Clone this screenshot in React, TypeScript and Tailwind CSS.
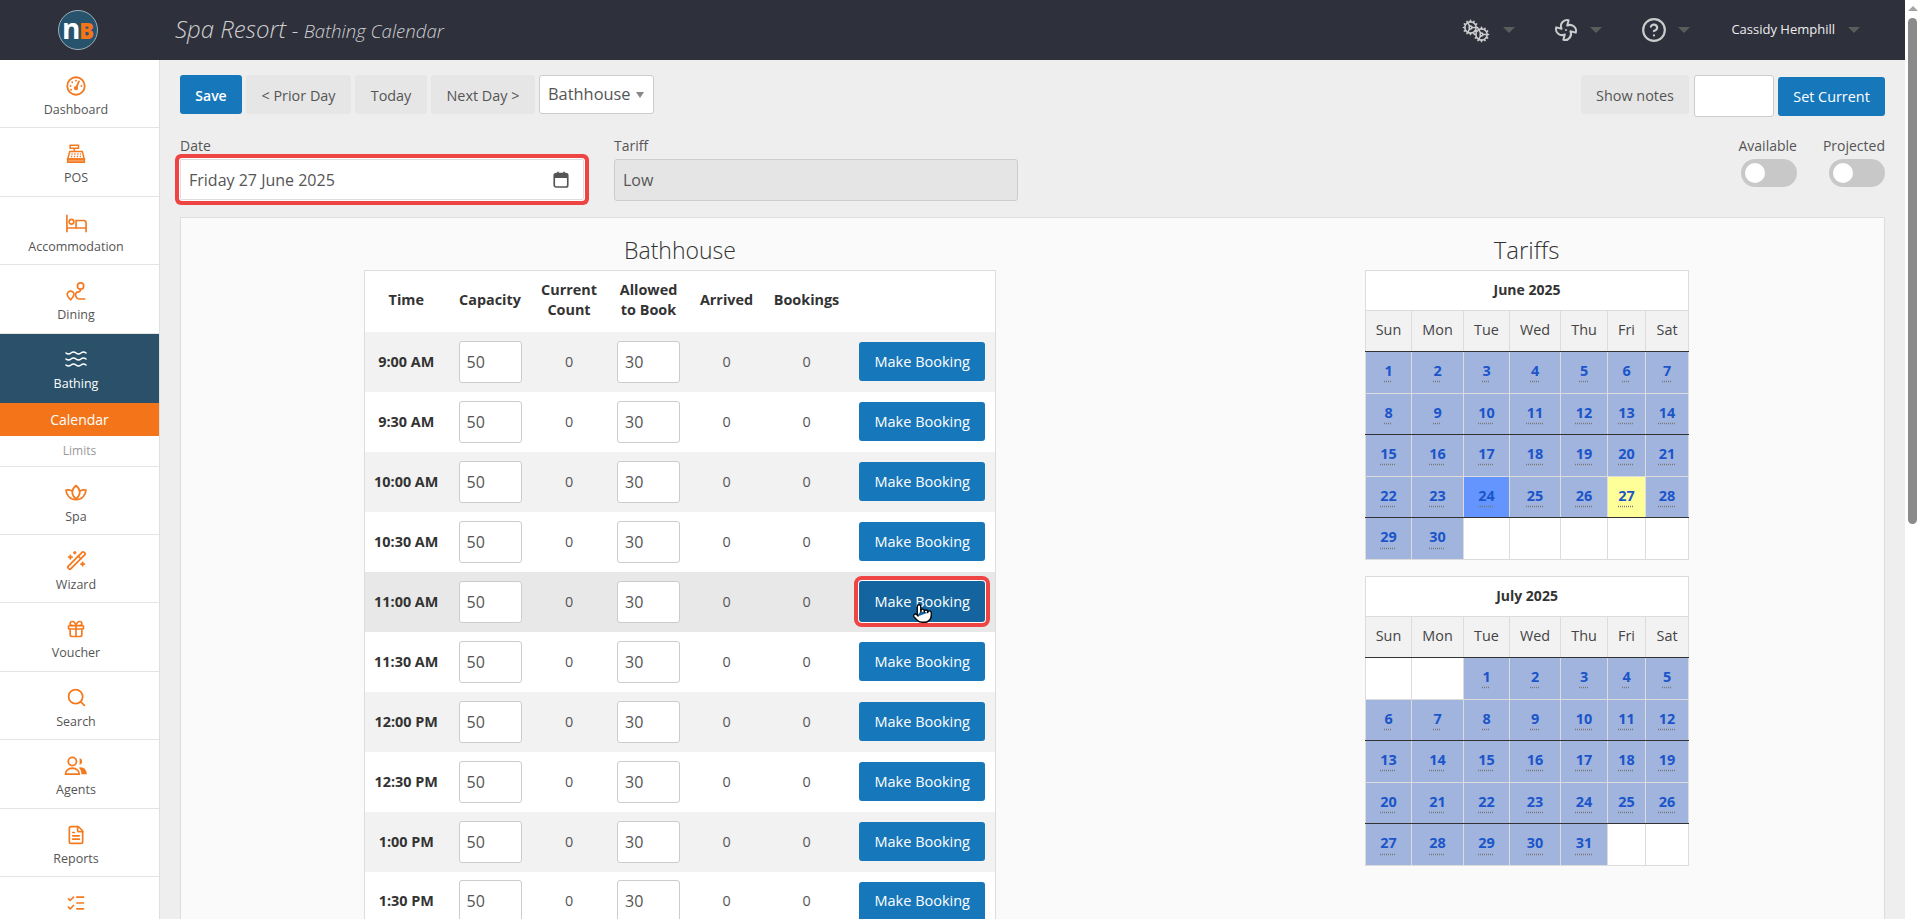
import { CircleHelp, Cog, Fan, FileText, Gift, ListChecks, Pointer, Search, WandSparkles, Waves } from "lucide-react";

function GaugeIcon() {
  return (
    <svg width="20" height="20" viewBox="0 0 24 24" fill="none" stroke="currentColor" strokeWidth="2.2" strokeLinecap="round">
      <circle cx="12" cy="12" r="10.5" />
      <path d="M12.5 13.5 15.500 6.500" />
      <circle cx="12" cy="14.500" r="1.500" />
      <path d="M12 5.500v.1M7.500 7.500v.1M5.500 12v.1M18.500 12v.1M6 16.500h.1" />
    </svg>
  );
}

function RegisterIcon() {
  return (
    <svg width="20" height="20" viewBox="0 0 24 24" fill="none" stroke="currentColor" strokeWidth="1.8">
      <path d="M5 1.500h10v3.500H5zM10 5v4" />
      <path d="M4.500 9h15L22 18H2z" />
      <path d="M6.500 12h1.500M10 12h1.500M13.500 12H15M17 12h1M6 15h1.500M9.500 15H11M13 15h1.500M16.500 15H18" strokeWidth="1.6" />
      <path d="M2 18h20v4H2z" fill="currentColor" fillOpacity="0.7" />
    </svg>
  );
}

function BedIcon() {
  return (
    <svg width="23" height="20" viewBox="0 0 27 24" fill="none" stroke="currentColor" strokeWidth="2">
      <path d="M2 2v21M25 23V12a3 3 0 0 0-3-3h-9v9M2 18h23" />
      <circle cx="7.500" cy="10.500" r="2.800" />
    </svg>
  );
}

function DiningIcon() {
  return (
    <svg width="20" height="21" viewBox="0 0 24 24" fill="none" stroke="currentColor" strokeWidth="2" strokeLinecap="round" strokeLinejoin="round">
      <circle cx="17.500" cy="5.500" r="3.800" />
      <path d="M5.500 22C3 19 1.500 17.300 1.500 15.500a4 4 0 0 1 8 0c0 1.800-1.500 3.500-4 6.500z" />
      <path d="M17.500 9.500c0 2.500-2 3-3.500 3.200s-2.500 1.300-2.500 3.300 1.500 5 4 5h7" />
    </svg>
  );
}

function LotusIcon() {
  return (
    <svg width="24" height="20" viewBox="0 0 28 24" fill="none" stroke="currentColor" strokeWidth="2" strokeLinejoin="round">
      <path d="M14 3c3 2.500 4.500 5 4.500 8 0 3-2 6-4.500 8-2.500-2-4.500-5-4.500-8 0-3 1.500-5.500 4.500-8z" />
      <path d="M9.500 9.500C7 8.500 4.500 8 2 8.500c.5 6 4.500 11.500 12 11.500 7.500 0 11.500-5.500 12-11.500-2.500-.5-5 0-7.500 1" />
    </svg>
  );
}

function AgentsIcon() {
  return (
    <svg width="24" height="20" viewBox="0 0 26 22" fill="none" stroke="currentColor" strokeWidth="2">
      <circle cx="9" cy="6" r="4.500" />
      <path d="M1.500 20c0-4 3-6.500 7.500-6.500s7.500 2.500 7.500 6.500z" />
      <path d="M17 2.200a4 4 0 0 1 0 7.600zM18 12.500c4 0 6.500 3 7 7.500h-6c0-3-1-5.500-3-7z" fill="currentColor" stroke="none" />
    </svg>
  );
}

function DateIcon() {
  return (
    <svg width="18" height="19" viewBox="0 0 24 24" fill="none" stroke="currentColor" strokeWidth="2.2" className="text-[#555]">
      <rect x="3" y="4" width="18" height="18" rx="2.500" />
      <path d="M3 6.500A2.500 2.500 0 0 1 5.500 4h13A2.500 2.500 0 0 1 21 6.500V10H3z" fill="currentColor" stroke="none" />
      <path d="M8 1.500V5M16 1.500V5" />
    </svg>
  );
}

const navTop = [
  { id: "dashboard", label: "Dashboard", icon: <GaugeIcon /> },
  { id: "pos", label: "POS", icon: <RegisterIcon /> },
  { id: "accommodation", label: "Accommodation", icon: <BedIcon /> },
  { id: "dining", label: "Dining", icon: <DiningIcon /> },
];

const navBottom = [
  { id: "spa", label: "Spa", icon: <LotusIcon /> },
  { id: "wizard", label: "Wizard", icon: <WandSparkles size={21} strokeWidth={2} /> },
  { id: "voucher", label: "Voucher", icon: <Gift size={20} strokeWidth={2} /> },
  { id: "search", label: "Search", icon: <Search size={21} strokeWidth={2} /> },
  { id: "agents", label: "Agents", icon: <AgentsIcon /> },
  { id: "reports", label: "Reports", icon: <FileText size={20} strokeWidth={2} /> },
  { id: "tasks", label: "", icon: <ListChecks size={20} strokeWidth={2} /> },
];

const slots = ["9:00 AM", "9:30 AM", "10:00 AM", "10:30 AM", "11:00 AM", "11:30 AM", "12:00 PM", "12:30 PM", "1:00 PM", "1:30 PM"];

const june = [
  [1, 2, 3, 4, 5, 6, 7],
  [8, 9, 10, 11, 12, 13, 14],
  [15, 16, 17, 18, 19, 20, 21],
  [22, 23, 24, 25, 26, 27, 28],
  [29, 30, 0, 0, 0, 0, 0],
];

const july = [
  [0, 0, 1, 2, 3, 4, 5],
  [6, 7, 8, 9, 10, 11, 12],
  [13, 14, 15, 16, 17, 18, 19],
  [20, 21, 22, 23, 24, 25, 26],
  [27, 28, 29, 30, 31, 0, 0],
];

function Caret() {
  return <span className="w-0 h-0 border-x-[6px] border-t-[6px] border-x-transparent border-t-[#5c5c5c]" />;
}

function NavItem({ label, icon }: { label: string; icon: React.ReactNode }) {
  return (
    <div className="h-[68.4px] shrink-0 border-b border-[#e4e4e4] flex flex-col items-center pt-[15px] pr-[7px]">
      <div className="h-[22px] flex items-center text-[#f47a20]">{icon}</div>
      {label && <div className="mt-[3px] text-[12.5px] leading-[20px] text-[#555]">{label}</div>}
    </div>
  );
}

function MonthTable({ title, weeks, today, selected }: { title: string; weeks: number[][]; today?: number; selected?: number }) {
  const days = ["Sun", "Mon", "Tue", "Wed", "Thu", "Fri", "Sat"];
  return (
    <table className="w-[323px] table-fixed border-collapse text-[14.4px] text-[#444] bg-white">
      <colgroup>
        <col className="w-[46px]" />
        <col className="w-[52px]" />
        <col className="w-[46px]" />
        <col className="w-[51px]" />
        <col className="w-[47px]" />
        <col className="w-[38px]" />
        <col className="w-[43px]" />
      </colgroup>
      <thead>
        <tr className="h-[40px]">
          <th colSpan={7} className="border border-[#dcdcdc] font-bold text-[#333] text-[14px] pb-[2px]">{title}</th>
        </tr>
        <tr className="h-[41px] bg-[#f2f2f2]">
          {days.map((d) => (
            <th key={d} className="border border-[#dcdcdc] border-b-[#333] font-normal pb-[2px]">{d}</th>
          ))}
        </tr>
      </thead>
      <tbody>
        {weeks.map((week, i) => (
          <tr key={i} className="h-[41.6px]">
            {week.map((n, j) => {
              let bg = n ? "bg-[#a0b4dd]" : "bg-white";
              if (n && n === selected) bg = "bg-[#6495ff]";
              if (n && n === today) bg = "bg-[#ffff99]";
              const dark = i === 1 || i === 3 ? "border-b-[#333]" : "";
              return (
                <td key={j} className={`border border-[#dcdcdc] text-center pb-[3px] ${dark} ${bg}`}>
                  {n > 0 && (
                    <span className="font-bold text-[#1b55c9] underline decoration-dotted decoration-[#777] underline-offset-[5px]">{n}</span>
                  )}
                </td>
              );
            })}
          </tr>
        ))}
      </tbody>
    </table>
  );
}

export default function App() {
  return (
    <div className="h-[919px] overflow-hidden flex font-['Open_Sans',sans-serif] text-[#555]">
      <div className="w-[1905px] shrink-0 flex flex-col">
        <header className="h-[60px] shrink-0 bg-[#2e303c] flex items-center pr-[45px]">
          <div className="w-[160px] shrink-0 pl-[58px]">
            <div className="w-[40px] h-[40px] rounded-full bg-[#27536d] border border-[#9fb0ba] flex items-baseline justify-center leading-[34px] font-bold">
              <span className="text-white text-[28px] tracking-[-1px]">n</span>
              <span className="text-[#f47519] text-[22px] font-extrabold">B</span>
            </div>
          </div>
          <div className="pl-[15px] pb-[3px] italic text-[#cfcfcf] font-light">
            <span className="text-[24px]">Spa Resort</span>
            <span className="text-[21px]"> - </span>
            <span className="text-[18.6px]">Bathing Calendar</span>
          </div>
          <div className="ml-auto flex items-center text-[#cccccc]">
            <div className="flex items-center gap-[13px]">
              <span className="relative w-[28px] h-[26px]">
                <Cog size={17} strokeWidth={2.25} className="absolute left-0 top-[2px]" />
                <Cog size={17} strokeWidth={2.25} className="absolute right-0 bottom-0" />
              </span>
              <Caret />
            </div>
            <div className="flex items-center gap-[12px] ml-[39px]">
              <Fan size={24} strokeWidth={2} />
              <Caret />
            </div>
            <div className="flex items-center gap-[11px] ml-[39px]">
              <CircleHelp size={26} strokeWidth={2} />
              <Caret />
            </div>
            <div className="flex items-center gap-[13px] ml-[41px]">
              <span className="text-[13px] text-[#eeeeee]">Cassidy Hemphill</span>
              <Caret />
            </div>
          </div>
        </header>

        <div className="flex-1 flex min-h-0">
          <aside className="w-[160px] shrink-0 bg-white border-r border-[#e0e0e0] flex flex-col overflow-hidden">
            {navTop.map((item) => (
              <NavItem key={item.id} label={item.label} icon={item.icon} />
            ))}
            <div className="h-[69px] shrink-0 bg-[#2a5169] flex flex-col items-center pt-[14px] pr-[7px] text-white">
              <div className="h-[22px] flex items-center"><Waves size={24} strokeWidth={1.6} /></div>
              <div className="mt-[4px] text-[12.5px] leading-[20px]">Bathing</div>
            </div>
            <div className="h-[33px] shrink-0 bg-[#f47519] text-white text-[14px] flex items-center justify-center">Calendar</div>
            <div className="h-[31px] shrink-0 border-b border-[#e4e4e4] text-[#999] text-[12px] flex items-center justify-center">Limits</div>
            {navBottom.map((item) => (
              <NavItem key={item.id} label={item.label} icon={item.icon} />
            ))}
          </aside>

          <main className="flex-1 min-w-0 bg-[#eeeeee] px-[20px] pt-[15px] overflow-hidden">
            <div className="flex justify-between items-start h-[46px]">
              <div className="flex items-start gap-[4px]">
                <button className="h-[39px] w-[62px] pt-[2px] rounded-[3px] bg-[#1777bb] text-white text-[14px] font-semibold">Save</button>
                <button className="h-[39px] w-[105px] pt-[2px] rounded-[3px] bg-[#e6e6e6] text-[14.4px]">&lt; Prior Day</button>
                <button className="h-[39px] w-[72px] pt-[2px] rounded-[3px] bg-[#e6e6e6] text-[14.4px]">Today</button>
                <button className="h-[39px] w-[104px] pt-[2px] rounded-[3px] bg-[#e6e6e6] text-[14.4px]">Next Day &gt;</button>
                <div className="h-[39px] w-[115px] rounded-[3px] bg-white border border-[#cccccc] flex items-center justify-between pl-[8px] pr-[9px] text-[16.4px]">
                  <span>Bathhouse</span>
                  <span className="w-0 h-0 border-x-[4px] border-t-[6px] border-x-transparent border-t-[#888]" />
                </div>
              </div>
              <div className="flex items-start gap-[4px]">
                <button className="h-[39px] w-[108px] pt-[2px] rounded-[3px] bg-[#e6e6e6] text-[14.4px]">Show notes</button>
                <input readOnly className="h-[42px] w-[80px] ml-[1px] rounded-[3px] bg-white border border-[#cccccc]" />
                <button className="mt-[2px] h-[39px] w-[107px] rounded-[3px] bg-[#1777bb] text-white text-[14.4px]">Set Current</button>
              </div>
            </div>

            <div className="flex justify-between items-start h-[96px] pt-[15px]">
              <div className="flex gap-[30px]">
                <div>
                  <div className="text-[14px] leading-[20px] h-[23px]">Date</div>
                  <div className="w-[404px] h-[41px] rounded-[2px] bg-white border border-[#dddddd] shadow-[0_0_0_1px_#ffffff,0_0_0_5px_#ef4444] flex items-center justify-between pl-[8px] pr-[13px] text-[16px]">
                    <span>Friday 27 June 2025</span>
                    <DateIcon />
                  </div>
                </div>
                <div>
                  <div className="text-[14px] leading-[20px] h-[23px]">Tariff</div>
                  <div className="w-[404px] h-[42px] rounded-[3px] bg-[#e5e5e5] border border-[#cccccc] flex items-center pl-[8px] text-[16px]">Low</div>
                </div>
              </div>
              <div className="flex gap-[26px]">
                <div className="flex flex-col items-end">
                  <div className="text-[14px] leading-[20px] h-[23px]">Available</div>
                  <div className="w-[56px] h-[28px] rounded-full bg-[#c8c8c8] flex items-center pl-[4px]">
                    <span className="w-[20px] h-[20px] rounded-full bg-white" />
                  </div>
                </div>
                <div className="flex flex-col items-end">
                  <div className="text-[14px] leading-[20px] h-[23px]">Projected</div>
                  <div className="w-[56px] h-[28px] rounded-full bg-[#c8c8c8] flex items-center pl-[4px]">
                    <span className="w-[20px] h-[20px] rounded-full bg-white" />
                  </div>
                </div>
              </div>
            </div>

            <section className="h-[900px] bg-[#fafafa] border border-[#dddddd] flex pl-[183px] pt-[14px] gap-[369px]">
              <div className="w-[632px] shrink-0">
                <h2 className="h-[38px] text-center text-[23px] leading-[36px] font-light text-[#333]">Bathhouse</h2>
                <table className="w-full table-fixed border-collapse bg-white border border-[#dddddd] text-[14.4px] text-[#555]">
                  <colgroup>
                    <col className="w-[83px]" />
                    <col className="w-[85px]" />
                    <col className="w-[73px]" />
                    <col className="w-[86px]" />
                    <col className="w-[70px]" />
                    <col className="w-[90px]" />
                    <col />
                  </colgroup>
                  <thead>
                    <tr className="h-[61px] text-[#333] font-bold leading-[20px]">
                      <th className="pb-[2px]">Time</th>
                      <th className="pb-[2px]">Capacity</th>
                      <th className="pb-[3px]">Current<br />Count</th>
                      <th className="pb-[3px]">Allowed<br />to Book</th>
                      <th className="pb-[2px]">Arrived</th>
                      <th className="pb-[2px]">Bookings</th>
                      <th />
                    </tr>
                  </thead>
                  <tbody>
                    {slots.map((slot, i) => (
                      <tr key={slot} className={`h-[60px] ${i === 4 ? "bg-[#e8e8e8]" : i % 2 === 0 ? "bg-[#f2f2f2]" : "bg-white"}`}>
                        <td className="text-center font-bold text-[#333]">{slot}</td>
                        <td>
                          <input readOnly defaultValue="50" className="block mx-auto w-[63px] h-[42px] rounded-[3px] bg-white border border-[#cccccc] pl-[7px] text-[16px]" />
                        </td>
                        <td className="text-center">0</td>
                        <td>
                          <input readOnly defaultValue="30" className="block mx-auto w-[63px] h-[42px] rounded-[3px] bg-white border border-[#cccccc] pl-[7px] text-[16px]" />
                        </td>
                        <td className="text-center">0</td>
                        <td className="text-center">0</td>
                        <td className="pr-[2px]">
                          {i === 4 ? (
                            <button className="relative block mx-auto w-[126px] h-[41px] rounded-[3px] bg-[#14659f] text-white text-[14.5px] shadow-[0_0_0_1px_#ffffff,0_0_0_5px_#ef4444]">
                              Make Booking
                              <Pointer size={21} strokeWidth={1.5} className="absolute left-[53px] top-[22px] fill-white text-black" />
                            </button>
                          ) : (
                            <button className="block mx-auto w-[126px] h-[39px] rounded-[3px] bg-[#1777bb] text-white text-[14.5px]">Make Booking</button>
                          )}
                        </td>
                      </tr>
                    ))}
                  </tbody>
                </table>
              </div>
              <div className="w-[323px] shrink-0">
                <h2 className="h-[38px] text-center text-[24px] leading-[36px] font-light text-[#333]">Tariffs</h2>
                <MonthTable title="June 2025" weeks={june} today={27} selected={24} />
                <div className="h-[16px]" />
                <MonthTable title="July 2025" weeks={july} />
              </div>
            </section>
          </main>
        </div>
      </div>

      <div className="w-[15px] shrink-0 bg-white flex flex-col items-center pt-[6px]">
        <span className="w-0 h-0 border-x-[5px] border-b-[5px] border-x-transparent border-b-[#a3a3a3]" />
        <div className="mt-[7px] w-[9px] h-[506px] rounded-full bg-[#8a8a8a]" />
      </div>
    </div>
  );
}
